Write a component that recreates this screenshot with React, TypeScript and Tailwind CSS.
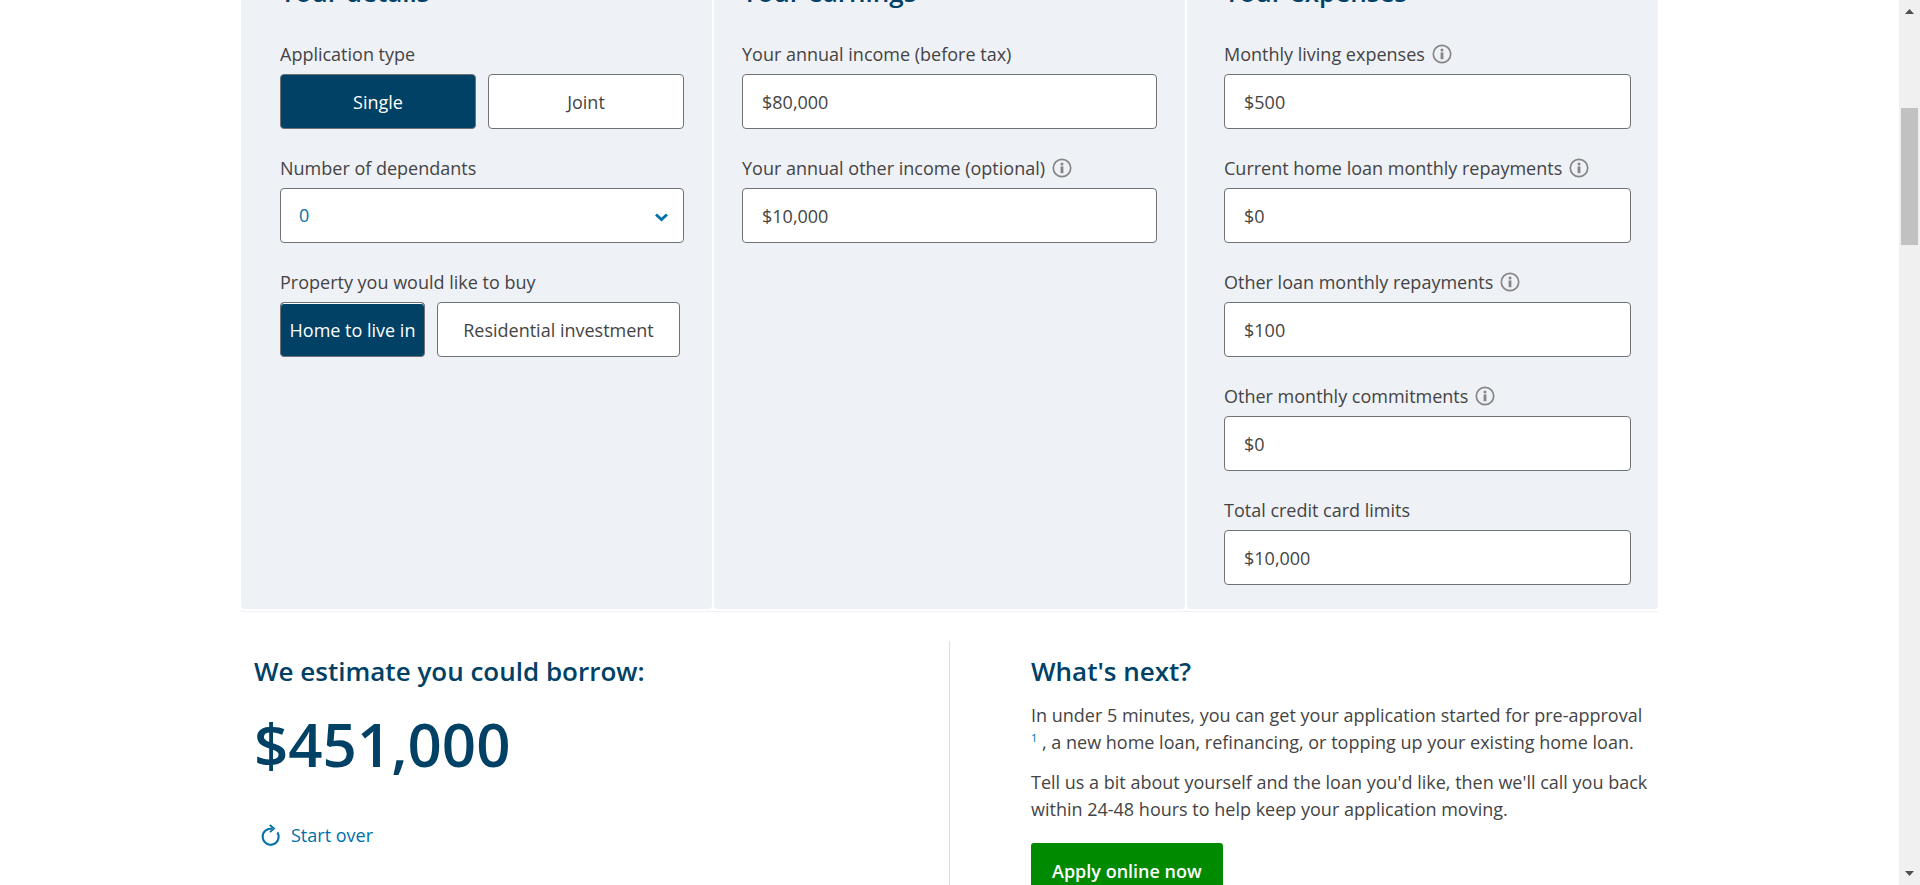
import type { ReactNode } from "react";

const boxClass = "h-[55px] w-full rounded border border-[#6f7377] bg-white";

function InfoIcon() {
  return (
    <svg viewBox="0 0 20 20" className="size-5 shrink-0" aria-hidden="true">
      <circle cx="10" cy="10" r="8.7" fill="none" stroke="#858585" strokeWidth="1.7" />
      <circle cx="10" cy="5.9" r="1.5" fill="#858585" />
      <path d="M8.6 8.4h2.8v6.8H8.6z" fill="#858585" />
    </svg>
  );
}

function Panel({ title, className, children }: { title: string; className: string; children: ReactNode }) {
  return (
    <section className={`rounded bg-[#eef1f6] pt-8 pb-6 ${className}`}>
      <h2 className="mb-[33px] text-[26px] leading-8 font-semibold text-[#004165]">{title}</h2>
      <div className="flex flex-col gap-[26px]">{children}</div>
    </section>
  );
}

function MoneyField({ id, label, value, info }: { id: string; label: string; value: string; info?: boolean }) {
  return (
    <div>
      <div className="mb-[7px] flex h-[26px] items-center gap-[7px]">
        <label htmlFor={id}>{label}</label>
        {info && (
          <button type="button" aria-label={`About ${label}`}>
            <InfoIcon />
          </button>
        )}
      </div>
      <input id={id} type="text" defaultValue={value} className={`${boxClass} px-[19px]`} />
    </div>
  );
}

function Choice({ label, selected, className }: { label: string; selected?: boolean; className: string }) {
  return (
    <button
      type="button"
      aria-pressed={!!selected}
      className={`h-[55px] rounded border border-[#6f7377] pt-[2px] whitespace-nowrap ${
        selected ? "bg-[#004165] text-white" : "bg-white"
      } ${className}`}
    >
      {label}
    </button>
  );
}

function ScrollBar() {
  return (
    <div className="flex h-full w-[21px] shrink-0 flex-col items-center bg-[#f0f0f0]" aria-hidden="true">
      <svg viewBox="0 0 9 5" className="mt-[9px] h-[5px] w-[9px]">
        <path d="M0 5L4.5 0L9 5z" fill="#505050" />
      </svg>
      <div className="mt-[94px] h-[137px] w-[17px] bg-[#c1c1c1]" />
      <svg viewBox="0 0 9 5" className="mt-auto mb-[9px] h-[5px] w-[9px]">
        <path d="M0 0L4.5 5L9 0z" fill="#505050" />
      </svg>
    </div>
  );
}

export default function App() {
  return (
    <div className="flex h-screen overflow-hidden bg-white font-['Open_Sans','Noto_Sans',sans-serif] text-[18px] leading-[27px] text-[#444]">
      <div className="min-w-0 flex-1 overflow-hidden">
        <main className="mx-auto -mt-[56px] max-w-[1417px]">
          <form className="grid grid-cols-3 gap-[2px] border-b border-[#edf1f6] pb-[2px]">
            <Panel title="Your details" className="pr-7 pl-[39px]">
              <fieldset>
                <legend className="mb-[7px] h-[26px] leading-[26px]">Application type</legend>
                <div className="flex gap-3">
                  <Choice label="Single" selected className="flex-1" />
                  <Choice label="Joint" className="flex-1" />
                </div>
              </fieldset>
              <div>
                <label htmlFor="dependants" className="mb-[7px] block h-[26px] leading-[26px]">
                  Number of dependants
                </label>
                <div className="relative">
                  <select
                    id="dependants"
                    defaultValue="0"
                    className={`${boxClass} appearance-none px-[18px] text-[#0070a8]`}
                  >
                    <option>0</option>
                    <option>1</option>
                    <option>2</option>
                    <option>3</option>
                  </select>
                  <svg
                    viewBox="0 0 13 9"
                    className="pointer-events-none absolute top-[25px] right-4 h-[9px] w-[13px]"
                    fill="none"
                    stroke="#0070a8"
                    strokeWidth="2.8"
                    aria-hidden="true"
                  >
                    <path d="M1 1.4L6.5 6.6L12 1.4" />
                  </svg>
                </div>
              </div>
              <fieldset>
                <legend className="mb-[7px] h-[26px] leading-[26px]">Property you would like to buy</legend>
                <div className="flex gap-3">
                  <Choice
                    label="Home to live in"
                    selected
                    className="w-[145px] shadow-[inset_0_1px_0_#ffffff]"
                  />
                  <Choice label="Residential investment" className="w-[243px]" />
                </div>
              </fieldset>
            </Panel>

            <Panel title="Your earnings" className="px-7">
              <MoneyField id="income" label="Your annual income (before tax)" value="$80,000" />
              <MoneyField id="other-income" label="Your annual other income (optional)" value="$10,000" info />
            </Panel>

            <Panel title="Your expenses" className="pr-[27px] pl-[37px]">
              <MoneyField id="living" label="Monthly living expenses" value="$500" info />
              <MoneyField id="home-loan" label="Current home loan monthly repayments" value="$0" info />
              <MoneyField id="other-loan" label="Other loan monthly repayments" value="$100" info />
              <MoneyField id="commitments" label="Other monthly commitments" value="$0" info />
              <MoneyField id="cards" label="Total credit card limits" value="$10,000" />
            </Panel>
          </form>

          <div className="grid grid-cols-[708fr_709fr] pt-[29px]">
            <section className="pt-[14px] pl-[13px]">
              <h2 className="text-[26px] leading-8 font-semibold text-[#004165]">We estimate you could borrow:</h2>
              <p className="mt-[21px] text-[60px] leading-[72px] font-semibold text-[#004165]">$451,000</p>
              <button type="button" className="mt-[42px] ml-[6px] flex items-center gap-[9px] text-[#0070a8]">
                <svg viewBox="0 0 22 24" className="h-6 w-[22px]" fill="none" stroke="#0070a8" aria-hidden="true">
                  <path d="M12 4.8A8 8 0 1 0 17.4 8.4" strokeWidth="2" />
                  <path d="M9.8 1L14 4.6L10 8.2" strokeWidth="1.8" />
                </svg>
                Start over
              </button>
            </section>
            <section className="border-l border-[#dcdfe2] pt-[14px] pr-2 pb-16 pl-[81px]">
              <h2 className="mb-[15px] text-[26px] leading-8 font-semibold text-[#004165]">What's next?</h2>
              <p className="mb-[13px]">
                In under 5 minutes, you can get your application started for pre-approval{" "}
                <a href="#footnote-1" className="align-super text-[11px] leading-none text-[#0070a8]">
                  1
                </a>{" "}
                , a new home loan, refinancing, or topping up your existing home loan.
              </p>
              <p>
                Tell us a bit about yourself and the loan you'd like, then we'll call you back within 24-48 hours to
                help keep your application moving.
              </p>
              <a
                href="#apply"
                className="mt-5 inline-flex h-[56px] items-center rounded-[3px] bg-[#008a00] px-[21px] font-semibold text-white"
              >
                Apply online now
              </a>
            </section>
          </div>
        </main>
      </div>
      <ScrollBar />
    </div>
  );
}
